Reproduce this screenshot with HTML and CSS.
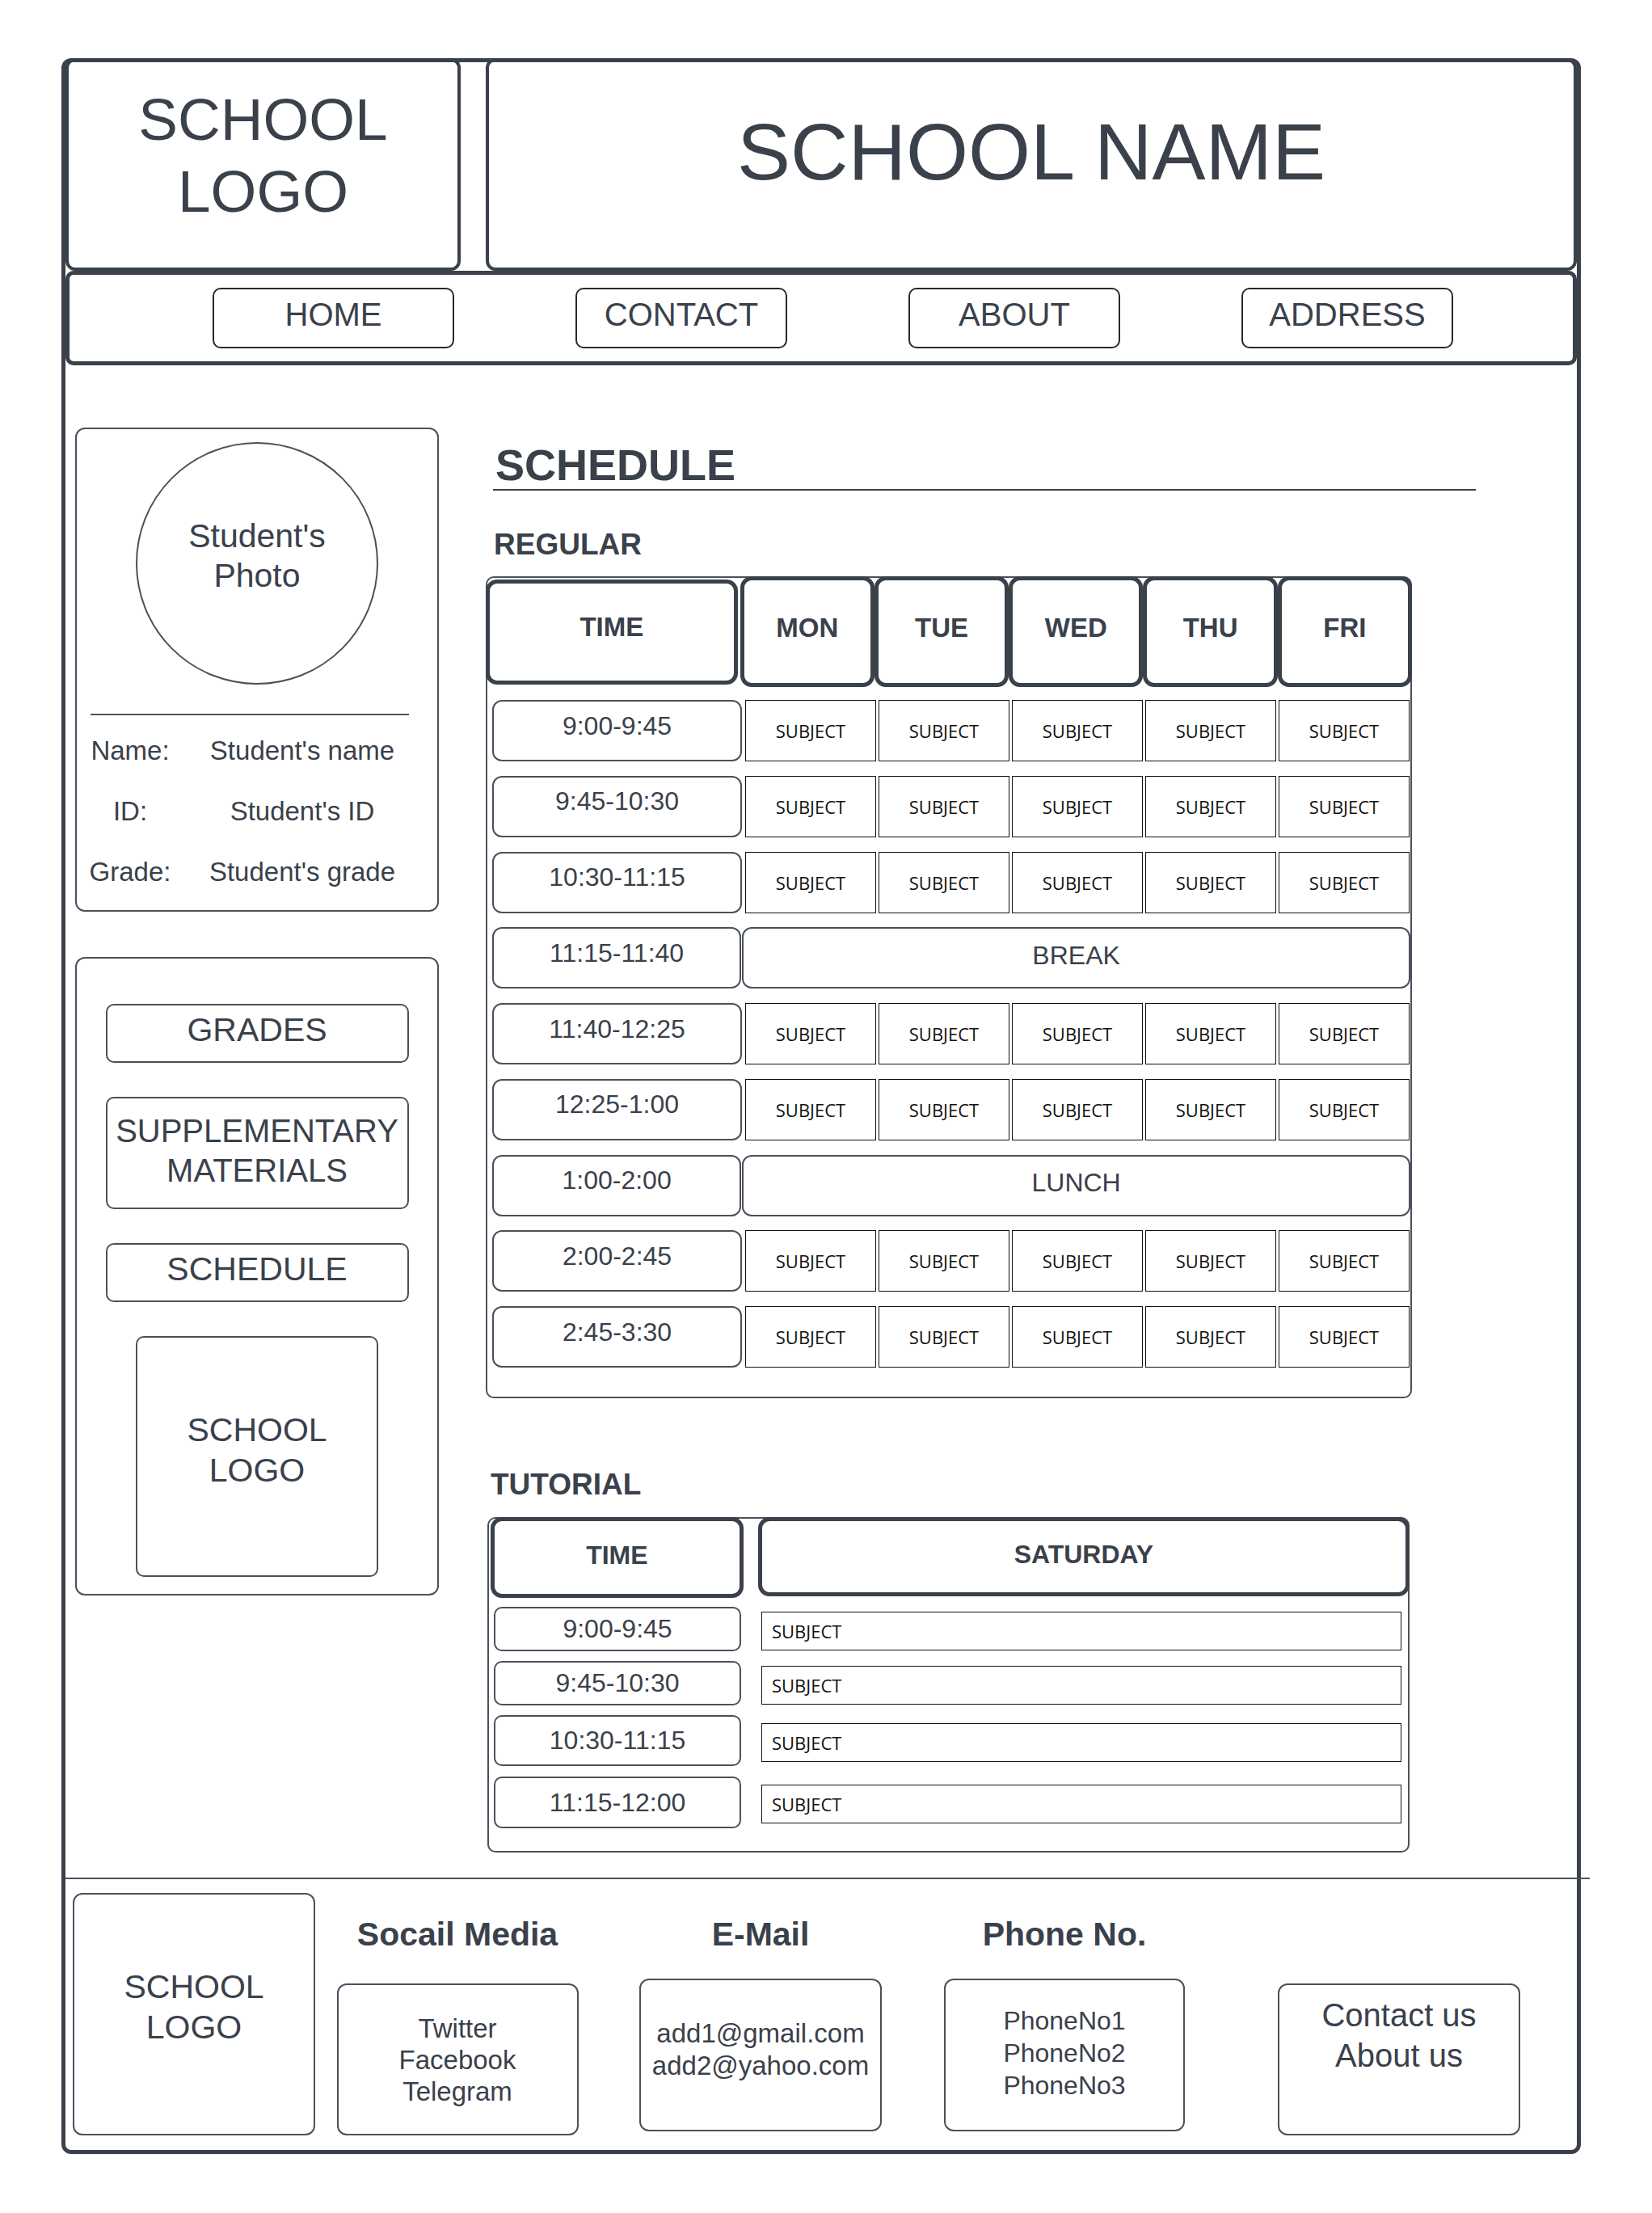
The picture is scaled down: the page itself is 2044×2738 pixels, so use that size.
FILE: index.html
```html
<!DOCTYPE html>
<html lang="en">
<head>
<meta charset="utf-8">
<title>School Portal - Schedule</title>
<link rel="stylesheet" href="styles.css">
</head>
<body>
<div class="frame">
  <header class="top">
    <div class="logo-box"><div class="logo-text">SCHOOL<br>LOGO</div></div>
    <div class="name-box"><h1 class="school-name">SCHOOL NAME</h1></div>
  </header>
  <nav class="navbar">
    <a class="nav-btn wide">HOME</a>
    <a class="nav-btn">CONTACT</a>
    <a class="nav-btn">ABOUT</a>
    <a class="nav-btn">ADDRESS</a>
  </nav>
  <div class="content">
    <aside class="side">
      <section class="profile">
        <div class="photo"><span>Student's<br>Photo</span></div>
        <div class="sep"></div>
        <div class="info">
          <div>Name:</div><div>Student's name</div>
          <div>ID:</div><div>Student's ID</div>
          <div>Grade:</div><div>Student's grade</div>
        </div>
      </section>
      <section class="menu">
        <div class="menu-btn short">GRADES</div>
        <div class="menu-btn tall">SUPPLEMENTARY<br>MATERIALS</div>
        <div class="menu-btn short">SCHEDULE</div>
        <div class="menu-logo">SCHOOL<br>LOGO</div>
      </section>
    </aside>
    <main class="main">
      <h2 class="sched-title">SCHEDULE</h2>
      <h3 class="sub-title">REGULAR</h3>
      <div class="reg">
        <div class="head-row">
          <div class="th th-time">TIME</div>
          <div class="th th-day">MON</div>
          <div class="th th-day">TUE</div>
          <div class="th th-day">WED</div>
          <div class="th th-day">THU</div>
          <div class="th th-day">FRI</div>
        </div>
        <div class="rows">
          <div class="row"><div class="tc">9:00-9:45</div><div class="subj"><div class="sc">SUBJECT</div><div class="sc">SUBJECT</div><div class="sc">SUBJECT</div><div class="sc">SUBJECT</div><div class="sc">SUBJECT</div></div></div>
          <div class="row"><div class="tc">9:45-10:30</div><div class="subj"><div class="sc">SUBJECT</div><div class="sc">SUBJECT</div><div class="sc">SUBJECT</div><div class="sc">SUBJECT</div><div class="sc">SUBJECT</div></div></div>
          <div class="row"><div class="tc">10:30-11:15</div><div class="subj"><div class="sc">SUBJECT</div><div class="sc">SUBJECT</div><div class="sc">SUBJECT</div><div class="sc">SUBJECT</div><div class="sc">SUBJECT</div></div></div>
          <div class="row"><div class="tc">11:15-11:40</div><div class="span">BREAK</div></div>
          <div class="row"><div class="tc">11:40-12:25</div><div class="subj"><div class="sc">SUBJECT</div><div class="sc">SUBJECT</div><div class="sc">SUBJECT</div><div class="sc">SUBJECT</div><div class="sc">SUBJECT</div></div></div>
          <div class="row"><div class="tc">12:25-1:00</div><div class="subj"><div class="sc">SUBJECT</div><div class="sc">SUBJECT</div><div class="sc">SUBJECT</div><div class="sc">SUBJECT</div><div class="sc">SUBJECT</div></div></div>
          <div class="row"><div class="tc">1:00-2:00</div><div class="span">LUNCH</div></div>
          <div class="row"><div class="tc">2:00-2:45</div><div class="subj"><div class="sc">SUBJECT</div><div class="sc">SUBJECT</div><div class="sc">SUBJECT</div><div class="sc">SUBJECT</div><div class="sc">SUBJECT</div></div></div>
          <div class="row"><div class="tc">2:45-3:30</div><div class="subj"><div class="sc">SUBJECT</div><div class="sc">SUBJECT</div><div class="sc">SUBJECT</div><div class="sc">SUBJECT</div><div class="sc">SUBJECT</div></div></div>
        </div>
      </div>
      <h3 class="sub-title tut-title">TUTORIAL</h3>
      <div class="tut">
        <div class="tut-head">
          <div class="th tth-time">TIME</div>
          <div class="th tth-sat">SATURDAY</div>
        </div>
        <div class="tut-rows">
          <div class="trow r-s"><div class="ttc">9:00-9:45</div><div class="tsc">SUBJECT</div></div>
          <div class="trow r-s"><div class="ttc">9:45-10:30</div><div class="tsc">SUBJECT</div></div>
          <div class="trow r-t"><div class="ttc">10:30-11:15</div><div class="tsc">SUBJECT</div></div>
          <div class="trow r-t2"><div class="ttc">11:15-12:00</div><div class="tsc">SUBJECT</div></div>
        </div>
      </div>
    </main>
  </div>
  <footer class="foot">
    <div class="f-logo">SCHOOL<br>LOGO</div>
    <div class="f-col social">
      <h4 class="f-head">Socail Media</h4>
      <div class="f-box social-box">Twitter<br>Facebook<br>Telegram</div>
    </div>
    <div class="f-col email">
      <h4 class="f-head">E-Mail</h4>
      <div class="f-box email-box">add1@gmail.com<br>add2@yahoo.com</div>
    </div>
    <div class="f-col phone">
      <h4 class="f-head">Phone No.</h4>
      <div class="f-box phone-box">PhoneNo1<br>PhoneNo2<br>PhoneNo3</div>
    </div>
    <div class="f-col contact">
      <div class="f-box contact-box">Contact us<br>About us</div>
    </div>
  </footer>
</div>
</body>
</html>
```

FILE: styles.css
```css
* { box-sizing: border-box; margin: 0; padding: 0; }

body {
  background: #ffffff;
  font-family: "Liberation Sans", Arial, sans-serif;
  color: #3a414b;
}

.frame {
  margin: 72px 0 0 76px;
  width: 1880px;
  border: 5px solid #3a414b;
  border-radius: 12px;
}

/* ---------- header ---------- */
.top {
  display: flex;
  gap: 31px;
  margin-top: -5px;
  height: 263px;
}

.logo-box {
  width: 489px;
  border: 4px solid #3a414b;
  border-radius: 12px;
  display: flex;
  align-items: center;
  justify-content: center;
  padding-bottom: 24px;
}

.logo-text {
  font-size: 73px;
  line-height: 89px;
  text-align: center;
}

.name-box {
  flex: 1;
  border: 4px solid #3a414b;
  border-radius: 12px;
  display: flex;
  align-items: center;
  justify-content: center;
  padding-bottom: 30px;
}

.school-name {
  font-size: 99px;
  font-weight: normal;
  line-height: 1.1;
}

/* ---------- nav ---------- */
.navbar {
  height: 117px;
  border: 5px solid #3a414b;
  border-radius: 10px;
  display: flex;
  align-items: center;
  gap: 150px;
  padding-left: 177px;
}

.nav-btn {
  width: 262px;
  height: 75px;
  border: 2px solid #26292e;
  border-radius: 10px;
  font-size: 40px;
  display: flex;
  align-items: center;
  justify-content: center;
  padding-bottom: 8px;
}

.nav-btn.wide { width: 299px; }

/* ---------- content ---------- */
.content {
  display: flex;
  align-items: flex-start;
  padding-left: 12px;
  gap: 58px;
}

.side {
  width: 450px;
  padding-top: 77px;
  display: flex;
  flex-direction: column;
  gap: 56px;
}

.profile {
  height: 599px;
  border: 2px solid #4a515c;
  border-radius: 12px;
  padding-top: 16px;
}

.photo {
  width: 300px;
  height: 300px;
  margin: 0 auto;
  border: 2px solid #4a515c;
  border-radius: 50%;
  display: flex;
  align-items: center;
  justify-content: center;
  text-align: center;
  font-size: 41px;
  line-height: 49px;
  padding-bottom: 18px;
}

.sep {
  margin: 36px 0 0 17px;
  width: 394px;
  border-top: 2px solid #4a515c;
}

.info {
  display: grid;
  grid-template-columns: 132px 294px;
  row-gap: 35px;
  margin-top: 24px;
  font-size: 33px;
  line-height: 40px;
  text-align: center;
  white-space: nowrap;
}

.menu {
  height: 790px;
  border: 2px solid #4a515c;
  border-radius: 12px;
  padding-top: 56px;
  display: flex;
  flex-direction: column;
  align-items: center;
  gap: 42px;
}

.menu-btn {
  width: 375px;
  border: 2px solid #4a515c;
  border-radius: 10px;
  font-size: 41px;
  line-height: 49px;
  display: flex;
  align-items: center;
  justify-content: center;
  text-align: center;
  white-space: nowrap;
}

.menu-btn.short { height: 73px; padding-bottom: 8px; }
.menu-btn.tall { height: 139px; font-size: 40px; padding-bottom: 6px; }

.menu-logo {
  width: 300px;
  height: 298px;
  border: 2px solid #4a515c;
  border-radius: 10px;
  display: flex;
  align-items: center;
  justify-content: center;
  text-align: center;
  font-size: 41px;
  line-height: 50px;
  padding-bottom: 16px;
}

/* ---------- main ---------- */
.main {
  width: 1225px;
  padding-top: 93px;
  padding-bottom: 31px;
}

.sched-title {
  width: 1216px;
  margin-left: 9px;
  padding-left: 3px;
  font-size: 54px;
  font-weight: bold;
  line-height: 60px;
  border-bottom: 2px solid #3a414b;
}

.sub-title {
  font-size: 37px;
  font-weight: bold;
  line-height: 40px;
  margin: 46.5px 0 0 10px;
}

.tut-title {
  margin: 86.5px 0 0 6px;
}

.th {
  border: 5px solid #3a414b;
  border-radius: 14px;
  display: flex;
  align-items: center;
  justify-content: center;
  font-weight: bold;
}

/* regular table */
.reg {
  margin-top: 19.5px;
  width: 1146px;
  border: 2px solid #4a515c;
  border-radius: 10px;
  padding-bottom: 36px;
}

.head-row {
  display: flex;
  align-items: flex-start;
  margin: -2px -2px 0 -2px;
}

.th-time {
  width: 312px;
  height: 130px;
  margin-top: 4px;
  margin-right: 3px;
  font-size: 33px;
  padding-bottom: 12px;
}

.th-day {
  width: 166.4px;
  height: 137px;
  font-size: 33px;
  padding-bottom: 10px;
}

.rows {
  display: flex;
  flex-direction: column;
  gap: 17.75px;
  padding: 16px 0 0 6px;
}

.row {
  display: flex;
  height: 76px;
  gap: 4px;
}

.tc {
  width: 309px;
  border: 2px solid #4a515c;
  border-radius: 12px;
  font-size: 32px;
  display: flex;
  align-items: center;
  justify-content: center;
  padding-bottom: 12px;
}

.subj {
  display: flex;
  gap: 3px;
}

.sc {
  width: 162px;
  border: 1px solid #111;
  font-family: "Open Sans", "Liberation Sans", sans-serif;
  font-size: 22px;
  color: #111;
  display: flex;
  align-items: center;
  justify-content: center;
}

.span {
  width: 829px;
  margin-left: -3px;
  border: 2px solid #4a515c;
  border-radius: 12px;
  font-size: 32px;
  display: flex;
  align-items: center;
  justify-content: center;
  padding-bottom: 6px;
}

/* tutorial table */
.tut {
  margin: 20.5px 0 0 2px;
  width: 1141px;
  border: 2px solid #4a515c;
  border-radius: 10px;
  padding-bottom: 28px;
}

.tut-head {
  display: flex;
  align-items: flex-start;
  margin: -2px -2px 0 -2px;
  padding-left: 4px;
}

.tth-time {
  width: 313px;
  height: 100px;
  font-size: 32px;
  padding-bottom: 6px;
}

.tth-sat {
  width: 807px;
  height: 98px;
  margin-left: 18px;
  font-size: 32px;
  padding-bottom: 6px;
}

.tut-rows {
  display: flex;
  flex-direction: column;
  gap: 12px;
  padding: 11px 0 0 6px;
}

.trow {
  display: flex;
  align-items: center;
}

.trow.r-s { height: 55px; }
.trow.r-t { height: 63px; }
.trow.r-t2 { height: 64px; margin-top: 1px; }

.ttc {
  width: 306px;
  height: 100%;
  border: 2px solid #4a515c;
  border-radius: 10px;
  font-size: 32px;
  display: flex;
  align-items: center;
  justify-content: center;
}

.tsc {
  width: 792px;
  height: 48px;
  margin-left: 25px;
  margin-top: 4px;
  border: 1px solid #111;
  font-family: "Open Sans", "Liberation Sans", sans-serif;
  font-size: 22px;
  color: #111;
  display: flex;
  align-items: center;
  padding-left: 12px;
}

/* ---------- footer ---------- */
.foot {
  margin-right: -16px;
  border-top: 2px solid #4a515c;
  display: flex;
  align-items: flex-start;
  padding: 17px 0 18px 9px;
}

.f-logo {
  width: 300px;
  height: 300px;
  border: 2px solid #4a515c;
  border-radius: 12px;
  display: flex;
  align-items: center;
  justify-content: center;
  text-align: center;
  font-size: 41px;
  line-height: 50px;
  padding-bottom: 18px;
}

.f-col {
  width: 300px;
  display: flex;
  flex-direction: column;
  align-items: center;
  margin-top: 28px;
}

.f-head {
  font-size: 41px;
  font-weight: bold;
  line-height: 46px;
  white-space: nowrap;
}

.f-box {
  width: 300px;
  border: 2px solid #4a515c;
  border-radius: 12px;
  display: flex;
  align-items: center;
  justify-content: center;
  text-align: center;
}

.social { margin-left: 26px; }
.email { margin-left: 75px; }
.phone { margin-left: 76px; }
.contact { margin-left: 114px; margin-top: 112px; }

.social-box {
  width: 299px;
  height: 188px;
  margin-top: 38px;
  font-size: 33px;
  line-height: 39px;
}

.email-box {
  height: 189px;
  margin-top: 32px;
  font-size: 33px;
  line-height: 40px;
  padding-bottom: 14px;
}

.phone-box {
  width: 298px;
  height: 189px;
  margin-top: 32px;
  font-size: 32px;
  line-height: 40px;
  padding-bottom: 6px;
}

.contact-box {
  height: 188px;
  align-items: flex-start;
  padding-top: 12px;
  font-size: 40px;
  line-height: 50px;
}
```
